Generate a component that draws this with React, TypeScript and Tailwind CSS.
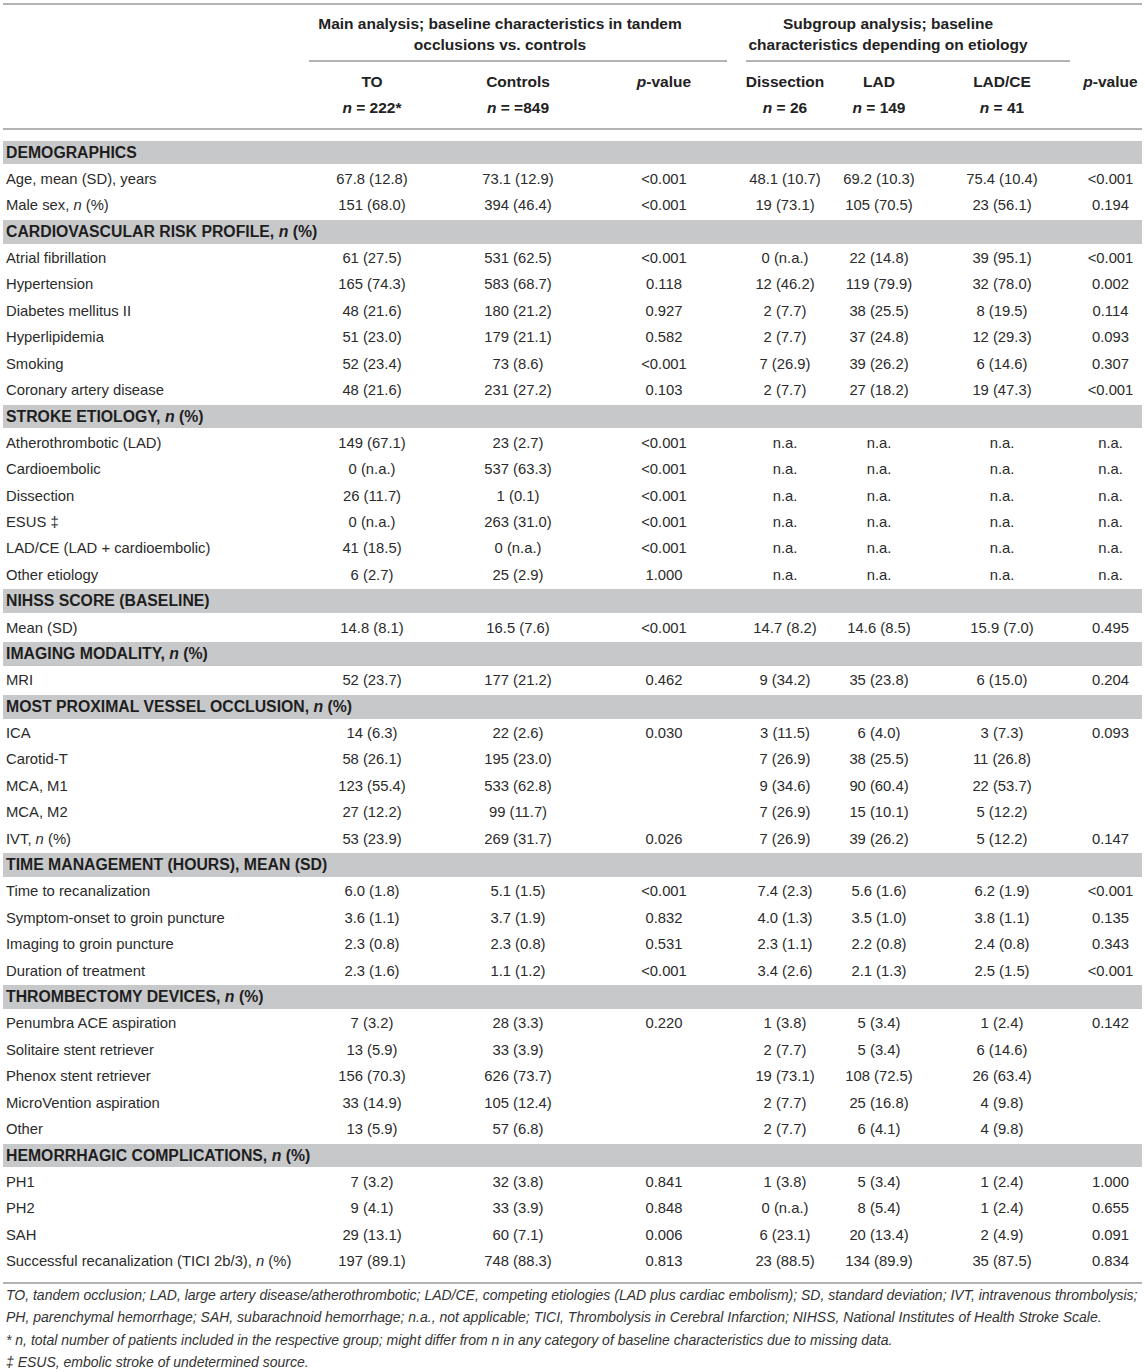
import React from "react";

type Row =
  | { kind: "section"; label: React.ReactNode }
  | { kind: "data"; label: React.ReactNode; v: string[] };

const I = ({ children }: { children: React.ReactNode }) => <i>{children}</i>;

const S = (label: React.ReactNode): Row => ({ kind: "section", label });
const D = (label: React.ReactNode, ...v: string[]): Row => ({ kind: "data", label, v });

const rows: Row[] = [
  S("DEMOGRAPHICS"),
  D("Age, mean (SD), years", "67.8 (12.8)", "73.1 (12.9)", "<0.001", "48.1 (10.7)", "69.2 (10.3)", "75.4 (10.4)", "<0.001"),
  D(<>Male sex, <I>n</I> (%)</>, "151 (68.0)", "394 (46.4)", "<0.001", "19 (73.1)", "105 (70.5)", "23 (56.1)", "0.194"),
  S(<>CARDIOVASCULAR RISK PROFILE, <I>n</I> (%)</>),
  D("Atrial fibrillation", "61 (27.5)", "531 (62.5)", "<0.001", "0 (n.a.)", "22 (14.8)", "39 (95.1)", "<0.001"),
  D("Hypertension", "165 (74.3)", "583 (68.7)", "0.118", "12 (46.2)", "119 (79.9)", "32 (78.0)", "0.002"),
  D("Diabetes mellitus II", "48 (21.6)", "180 (21.2)", "0.927", "2 (7.7)", "38 (25.5)", "8 (19.5)", "0.114"),
  D("Hyperlipidemia", "51 (23.0)", "179 (21.1)", "0.582", "2 (7.7)", "37 (24.8)", "12 (29.3)", "0.093"),
  D("Smoking", "52 (23.4)", "73 (8.6)", "<0.001", "7 (26.9)", "39 (26.2)", "6 (14.6)", "0.307"),
  D("Coronary artery disease", "48 (21.6)", "231 (27.2)", "0.103", "2 (7.7)", "27 (18.2)", "19 (47.3)", "<0.001"),
  S(<>STROKE ETIOLOGY, <I>n</I> (%)</>),
  D("Atherothrombotic (LAD)", "149 (67.1)", "23 (2.7)", "<0.001", "n.a.", "n.a.", "n.a.", "n.a."),
  D("Cardioembolic", "0 (n.a.)", "537 (63.3)", "<0.001", "n.a.", "n.a.", "n.a.", "n.a."),
  D("Dissection", "26 (11.7)", "1 (0.1)", "<0.001", "n.a.", "n.a.", "n.a.", "n.a."),
  D("ESUS ‡", "0 (n.a.)", "263 (31.0)", "<0.001", "n.a.", "n.a.", "n.a.", "n.a."),
  D("LAD/CE (LAD + cardioembolic)", "41 (18.5)", "0 (n.a.)", "<0.001", "n.a.", "n.a.", "n.a.", "n.a."),
  D("Other etiology", "6 (2.7)", "25 (2.9)", "1.000", "n.a.", "n.a.", "n.a.", "n.a."),
  S("NIHSS SCORE (BASELINE)"),
  D("Mean (SD)", "14.8 (8.1)", "16.5 (7.6)", "<0.001", "14.7 (8.2)", "14.6 (8.5)", "15.9 (7.0)", "0.495"),
  S(<>IMAGING MODALITY, <I>n</I> (%)</>),
  D("MRI", "52 (23.7)", "177 (21.2)", "0.462", "9 (34.2)", "35 (23.8)", "6 (15.0)", "0.204"),
  S(<>MOST PROXIMAL VESSEL OCCLUSION, <I>n</I> (%)</>),
  D("ICA", "14 (6.3)", "22 (2.6)", "0.030", "3 (11.5)", "6 (4.0)", "3 (7.3)", "0.093"),
  D("Carotid-T", "58 (26.1)", "195 (23.0)", "", "7 (26.9)", "38 (25.5)", "11 (26.8)", ""),
  D("MCA, M1", "123 (55.4)", "533 (62.8)", "", "9 (34.6)", "90 (60.4)", "22 (53.7)", ""),
  D("MCA, M2", "27 (12.2)", "99 (11.7)", "", "7 (26.9)", "15 (10.1)", "5 (12.2)", ""),
  D(<>IVT, <I>n</I> (%)</>, "53 (23.9)", "269 (31.7)", "0.026", "7 (26.9)", "39 (26.2)", "5 (12.2)", "0.147"),
  S("TIME MANAGEMENT (HOURS), MEAN (SD)"),
  D("Time to recanalization", "6.0 (1.8)", "5.1 (1.5)", "<0.001", "7.4 (2.3)", "5.6 (1.6)", "6.2 (1.9)", "<0.001"),
  D("Symptom-onset to groin puncture", "3.6 (1.1)", "3.7 (1.9)", "0.832", "4.0 (1.3)", "3.5 (1.0)", "3.8 (1.1)", "0.135"),
  D("Imaging to groin puncture", "2.3 (0.8)", "2.3 (0.8)", "0.531", "2.3 (1.1)", "2.2 (0.8)", "2.4 (0.8)", "0.343"),
  D("Duration of treatment", "2.3 (1.6)", "1.1 (1.2)", "<0.001", "3.4 (2.6)", "2.1 (1.3)", "2.5 (1.5)", "<0.001"),
  S(<>THROMBECTOMY DEVICES, <I>n</I> (%)</>),
  D("Penumbra ACE aspiration", "7 (3.2)", "28 (3.3)", "0.220", "1 (3.8)", "5 (3.4)", "1 (2.4)", "0.142"),
  D("Solitaire stent retriever", "13 (5.9)", "33 (3.9)", "", "2 (7.7)", "5 (3.4)", "6 (14.6)", ""),
  D("Phenox stent retriever", "156 (70.3)", "626 (73.7)", "", "19 (73.1)", "108 (72.5)", "26 (63.4)", ""),
  D("MicroVention aspiration", "33 (14.9)", "105 (12.4)", "", "2 (7.7)", "25 (16.8)", "4 (9.8)", ""),
  D("Other", "13 (5.9)", "57 (6.8)", "", "2 (7.7)", "6 (4.1)", "4 (9.8)", ""),
  S(<>HEMORRHAGIC COMPLICATIONS, <I>n</I> (%)</>),
  D("PH1", "7 (3.2)", "32 (3.8)", "0.841", "1 (3.8)", "5 (3.4)", "1 (2.4)", "1.000"),
  D("PH2", "9 (4.1)", "33 (3.9)", "0.848", "0 (n.a.)", "8 (5.4)", "1 (2.4)", "0.655"),
  D("SAH", "29 (13.1)", "60 (7.1)", "0.006", "6 (23.1)", "20 (13.4)", "2 (4.9)", "0.091"),
  D(<>Successful recanalization (TICI 2b/3), <I>n</I> (%)</>, "197 (89.1)", "748 (88.3)", "0.813", "23 (88.5)", "134 (89.9)", "35 (87.5)", "0.834"),
];

const GRID = "grid grid-cols-[296px_146px_146px_146px_96px_92px_154px_63px]";

export default function App() {
  return (
    <div
      className="w-[1145px] bg-white px-[3px] pt-[3px] pb-[6px] text-[#2b2b2b]"
      style={{ fontFamily: '"Liberation Sans", Arial, sans-serif' }}
    >
      <div className="h-[2px] bg-[#b3b3b3]" />
      {/* group headers */}
      <div className={`${GRID} h-[55px] text-[15.5px] font-bold leading-[21px] text-[#222]`}>
        <div />
        <div className="col-span-3 pt-[8px] pr-[36px] text-center">
          <div>Main analysis; baseline characteristics in tandem</div>
          <div>occlusions vs. controls</div>
        </div>
        <div className="col-span-3 pt-[8px] pr-[40px] text-center">
          <div>Subgroup analysis; baseline</div>
          <div>characteristics depending on etiology</div>
        </div>
        <div />
      </div>
      <div className={`${GRID} h-[2px]`}>
        <div />
        <div className="col-span-3 mx-[10px] bg-[#b3b3b3]" />
        <div className="col-span-3 mx-[9px] bg-[#b3b3b3]" />
        <div />
      </div>
      {/* column headers */}
      <div className={`${GRID} pt-[7px] pb-[7px] text-[15.5px] font-bold leading-[26px] text-[#222]`}>
        <div />
        <div className="text-center">
          <div>TO</div>
          <div>
            <i>n</i> = 222*
          </div>
        </div>
        <div className="text-center">
          <div>Controls</div>
          <div>
            <i>n</i> = =849
          </div>
        </div>
        <div className="text-center">
          <i>p</i>-value
        </div>
        <div className="text-center">
          <div>Dissection</div>
          <div>
            <i>n</i> = 26
          </div>
        </div>
        <div className="text-center">
          <div>LAD</div>
          <div>
            <i>n</i> = 149
          </div>
        </div>
        <div className="text-center">
          <div>LAD/CE</div>
          <div>
            <i>n</i> = 41
          </div>
        </div>
        <div className="text-center">
          <i>p</i>-value
        </div>
      </div>
      <div className="h-[2px] bg-[#b3b3b3]" />
      <div className="h-[9.4px]" />
      {/* body */}
      <div className="flex flex-col">
        {rows.map((r, i) =>
          r.kind === "section" ? (
            <div key={i} className="flex h-[26.4px] flex-col justify-center py-[1.7px]">
              <div className="flex flex-1 items-center bg-[#c7c8ca] pl-[3px] text-[15.8px] font-bold text-[#1e1e1e]">
                <span className="whitespace-pre">{r.label}</span>
              </div>
            </div>
          ) : (
            <div key={i} className={`${GRID} h-[26.4px] items-center text-[14.8px]`}>
              <div className="pl-[3px] whitespace-nowrap">{r.label}</div>
              {r.v.map((v, j) => (
                <div key={j} className="text-center whitespace-nowrap">
                  {v}
                </div>
              ))}
            </div>
          )
        )}
      </div>
      <div className="h-[7.5px]" />
      <div className="h-[2px] bg-[#b3b3b3]" />
      <div className="pl-[3px] text-[14px] italic leading-[22.4px] text-[#333]">
        <div className="whitespace-nowrap">
          TO, tandem occlusion; LAD, large artery disease/atherothrombotic; LAD/CE, competing etiologies (LAD plus cardiac embolism); SD, standard deviation; IVT, intravenous thrombolysis;
        </div>
        <div className="whitespace-nowrap">
          PH, parenchymal hemorrhage; SAH, subarachnoid hemorrhage; n.a., not applicable; TICI, Thrombolysis in Cerebral Infarction; NIHSS, National Institutes of Health Stroke Scale.
        </div>
        <div className="whitespace-nowrap">
          * n, total number of patients included in the respective group; might differ from n in any category of baseline characteristics due to missing data.
        </div>
        <div className="whitespace-nowrap">‡ ESUS, embolic stroke of undetermined source.</div>
      </div>
    </div>
  );
}
